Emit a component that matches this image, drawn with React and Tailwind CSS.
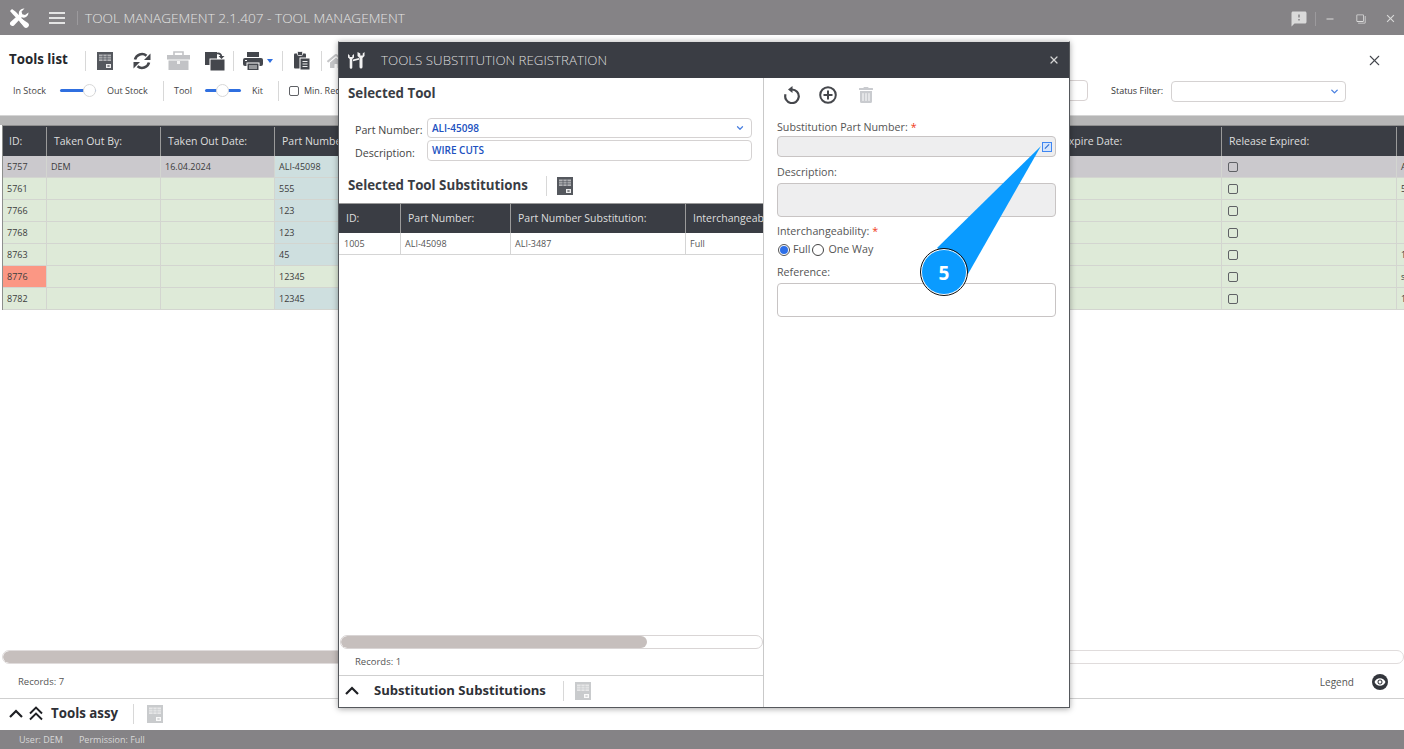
import { FaHome, FaTrashAlt } from 'react-icons/fa';
import { MdFeedback, MdClose, MdRemove, MdFilterNone, MdRemoveRedEye } from 'react-icons/md';
import { ChevronDown, X } from 'lucide-react';

const ROWS = [
  { id: '5757', by: 'DEM', date: '16.04.2024', part: 'ALI-45098', last: 'A', selected: true },
  { id: '5761', part: '555', last: '5' },
  { id: '7766', part: '123', last: '' },
  { id: '7768', part: '123', last: '' },
  { id: '8763', part: '45', last: '1' },
  { id: '8776', part: '12345', last: 's', expired: true },
  { id: '8782', part: '12345', last: '1' },
];

const COLS = 'grid grid-cols-[44px_114px_114px_200px_581px_166px_175px_60px]';
const SUB_COLS = 'grid grid-cols-[62px_110px_175px_100px]';

// little sheet with grid lines, used for the excel export buttons
function ExcelIcon({ faded }) {
  const fill = faded ? '#c9cbcd' : '#55585e';
  return (
    <svg width="16" height="18" viewBox="0 0 16 18" className="shrink-0">
      <rect width="16" height="18" fill={fill} />
      <rect x="2" y="2.500" width="12" height="6.500" fill="#fff" opacity="0.55" />
      <path d="M2 4.700h12M2 6.900h12M6 2.500v6.500M10 2.500v6.500" stroke={fill} strokeWidth="0.7" />
      <rect x="9" y="12" width="5" height="4" fill="#fff" opacity="0.9" />
      <path d="M10.500 13l2 2m0-2l-2 2" stroke={fill} strokeWidth="0.9" />
    </svg>
  );
}

function SyncIcon() {
  return (
    <svg width="20" height="20" viewBox="0 0 20 20" className="shrink-0" fill="none" stroke="#45474c" strokeWidth="2.600">
      <path d="M3 8.500a7.200 7.200 0 0 1 11.500-3.800" />
      <path d="M17 11.500a7.200 7.200 0 0 1-11.500 3.800" />
      <path d="M18.500 2.500v6.500h-6.500z" fill="#45474c" stroke="none" />
      <path d="M1.500 17.500v-6.500h6.500z" fill="#45474c" stroke="none" />
    </svg>
  );
}

function ToolboxIcon() {
  return (
    <svg width="23" height="19" viewBox="0 0 23 19" className="shrink-0">
      <path d="M7 4V1h9v3" fill="none" stroke="#c2c3c6" strokeWidth="1.600" />
      <rect y="4" width="23" height="4.500" fill="#c2c3c6" />
      <rect x="1.500" y="9.500" width="20" height="9.500" fill="#c2c3c6" />
      <rect x="10" y="10" width="3" height="3" fill="#f4f4f4" />
    </svg>
  );
}

function ExportIcon() {
  return (
    <svg width="20" height="20" viewBox="0 0 20 20" className="shrink-0">
      <rect x="0" y="1" width="12" height="13" fill="#44474d" />
      <rect x="5" y="8" width="15" height="12" fill="#44474d" stroke="#fff" strokeWidth="1" />
      <path d="M12 2.500c2.500-.5 4 .5 4.500 3" fill="none" stroke="#44474d" strokeWidth="1.500" />
      <path d="M13.500 5h6l-3 3z" fill="#44474d" />
    </svg>
  );
}

function PrinterIcon() {
  return (
    <svg width="20" height="20" viewBox="0 0 20 20" className="shrink-0">
      <rect x="4" y="1" width="12" height="5" fill="#44474d" />
      <rect y="7" width="20" height="8" rx="2" fill="#44474d" />
      <rect x="2" y="9" width="2" height="1" fill="#fff" />
      <rect x="4" y="12" width="12" height="7.500" fill="#44474d" stroke="#fff" strokeWidth="1" />
      <path d="M6 15h8M6 17h8" stroke="#fff" strokeWidth="0.9" />
    </svg>
  );
}

function ClipboardIcon() {
  return (
    <svg width="16" height="19" viewBox="0 0 16 19" className="shrink-0">
      <rect x="0" y="2.500" width="12" height="15" rx="1" fill="#44474d" />
      <rect x="3.500" y="0.500" width="5" height="4" rx="1" fill="#44474d" stroke="#fff" strokeWidth="0.8" />
      <rect x="6" y="7" width="10" height="12" fill="#44474d" stroke="#fff" strokeWidth="1" />
      <path d="M8.500 10.500h5M8.500 13h5M8.500 15.500h5" stroke="#fff" strokeWidth="0.9" />
    </svg>
  );
}

function AppLogo() {
  return (
    <svg width="20" height="20" viewBox="0 0 20 20" className="shrink-0" fill="#fff">
      <path d="M1 3l2-2 4 3 9 10-2.500 2.500L4 6.500z" />
      <path d="M13 11l-2.500 2.500 4.500 5.500a2.500 2.500 0 0 0 4-4z" />
      <path d="M19.500 4.500a5 5 0 0 1-6.800 4.800L5 17.500a2.500 2.500 0 0 1-3.500-3.500l8.400-7.600A5 5 0 0 1 15.500.500L12.500 3.500l.8 2.700 2.700.8z" />
    </svg>
  );
}

function ToolsGlyph() {
  // pair of upright wrenches in the dialog title
  return (
    <svg width="18" height="18" viewBox="0 0 18 18" fill="#f2f2f2" className="shrink-0">
      <path d="M1 2v3.500L2.700 7v8.500a1.300 1.300 0 0 0 2.600 0V7L7 5.500V2L5.300 3.500V5H2.700V3.500z" transform="translate(0 1)" />
      <path d="M10.500 1v4L12.500 7v9a1.500 1.500 0 0 0 3 0V7L17.500 5V1l-1.800 1.500V4.500h-2.400V2.500z" />
      <path d="M6 8.500l6-1.500v1.800l-6 1.500z" />
    </svg>
  );
}

function Chevron() {
  return (
    <svg width="14" height="9" viewBox="0 0 14 9" fill="none" stroke="#1f2024" strokeWidth="2.200" className="shrink-0">
      <path d="M1 8l6-6 6 6" />
    </svg>
  );
}

function DoubleChevron() {
  return (
    <svg width="14" height="15" viewBox="0 0 14 15" fill="none" stroke="#1f2024" strokeWidth="1.900" className="shrink-0">
      <path d="M1 7.500l6-6 6 6M1 13.500l6-6 6 6" />
    </svg>
  );
}

function RefreshIcon() {
  return (
    <svg width="18" height="18" viewBox="0 0 18 18" className="shrink-0" fill="none" stroke="#45474c" strokeWidth="2.200">
      <path d="M9 3.500a6.800 6.800 0 1 1-6.500 4.800" />
      <path d="M9.500 0v7L5 3.500z" fill="#45474c" stroke="none" />
    </svg>
  );
}

function AddIcon() {
  return (
    <svg width="18" height="18" viewBox="0 0 18 18" className="shrink-0" fill="none" stroke="#45474c" strokeWidth="2">
      <circle cx="9" cy="9" r="7.800" />
      <path d="M9 4.500v9M4.500 9h9" />
    </svg>
  );
}

function Divider({ h = 'h-[20px]' }) {
  return <div className={`w-px ${h} bg-[#d8d8d8] shrink-0`} />;
}

function Toggle({ knob }) {
  return (
    <div className="relative w-[36px] h-[14px] flex items-center shrink-0">
      <div className="w-full h-[3px] bg-[#2f6fe0] rounded-full" />
      <div className={`absolute ${knob} w-[13px] h-[13px] rounded-full bg-white border border-[#d8d8d8]`} />
    </div>
  );
}

function CheckBox() {
  return <div className="w-[10px] h-[10px] border-[1.500px] border-[#5f6165] rounded-[2px] bg-transparent" />;
}

function MainTable() {
  return (
    <div className="flex-1 min-h-0 overflow-hidden pl-[2px]">
      <div className="w-[1456px] border-l border-[#8d8f8d]">
        <div className={`${COLS} h-[31px] pt-[1px] bg-[#3a3d44] text-[#dedede] text-[10.500px] border-t border-[#8e8e8e]`}>
          {['ID:', 'Taken Out By:', 'Taken Out Date:', 'Part Number', '', 'Expire Date:', 'Release Expired:', ''].map((h, i) => (
            <div key={i} className={`flex items-center border-r border-[#9a9a9a] whitespace-nowrap ${i === 0 ? 'pl-[6px]' : 'pl-[7px]'}`}>{h}</div>
          ))}
        </div>
        {ROWS.map((r) => {
          const bg = r.selected ? 'bg-[#cbc9cd]' : 'bg-[#deead8]';
          const partBg = r.expired ? 'bg-[#deead8]' : 'bg-[#cedfdf]';
          return (
            <div key={r.id} className={`${COLS} h-[22px] text-[9px] text-[#3c3c3c] ${bg}`}>
              <div className={`flex items-center pl-[4px] border-r border-b border-[#d3d5d0] ${r.expired ? 'bg-[#fb9784]' : ''}`}>{r.id}</div>
              <div className="flex items-center pl-[4px] border-r border-b border-[#d3d5d0]">{r.by}</div>
              <div className="flex items-center pl-[4px] border-r border-b border-[#d3d5d0]">{r.date}</div>
              <div className={`flex items-center pl-[4px] border-b border-[#d3d5d0] ${partBg}`}>{r.part}</div>
              <div className="border-r border-b border-[#d3d5d0]" />
              <div className="border-r border-b border-[#d3d5d0]" />
              <div className="flex items-center pl-[6px] border-r border-b border-[#d3d5d0]">
                <CheckBox />
              </div>
              <div className="flex items-center pl-[4px] border-b border-[#d3d5d0]">{r.last}</div>
            </div>
          );
        })}
      </div>
    </div>
  );
}

function Field({ label, required, className, children }) {
  return (
    <div className={className}>
      <div className="h-[16px] pb-[2px] flex items-center text-[10.700px] text-[#555] whitespace-nowrap">
        {label}
        {required && <span className="text-[#f03a17] ml-[3px]">*</span>}
      </div>
      {children}
    </div>
  );
}

function Dialog() {
  return (
    <div className="absolute left-[338px] top-[41px] w-[732px] h-[667px] flex flex-col border border-[#55585c] border-t-[#dcdcdc] bg-white shadow-[0_1px_6px_rgba(0,0,0,0.35)]">
      <div className="h-[36px] shrink-0 bg-[#3a3d44] flex items-center pl-[8px] pr-[9px] text-[#dcdcdc]">
        <ToolsGlyph />
        <span className="ml-[16px] mt-[1px] text-[13.300px] font-light whitespace-nowrap">TOOLS SUBSTITUTION REGISTRATION</span>
        <X size={12} strokeWidth={2.5} className="ml-auto text-[#d4d4d4]" />
      </div>
      <div className="flex-1 flex min-h-0">
        <div className="w-[425px] shrink-0 flex flex-col border-r border-[#c9c9c9] min-w-0">
          <div className="pl-[9px] pt-[6px] h-[39px] text-[13.300px] font-bold text-[#3a3d44]">Selected Tool</div>
          <div className="flex items-center h-[22px] pl-[16px] pr-[11px]">
            <span className="w-[72px] text-[10.700px] text-[#444] mt-[5px]">Part Number:</span>
            <div className="flex-1 h-[20px] border border-[#d5d2d2] rounded-[4px] flex items-center pl-[4px] pr-[6px] text-[10px] font-semibold text-[#2050c0]">
              ALI-45098
              <ChevronDown size={10} strokeWidth={3} className="ml-auto text-[#4a80e0]" />
            </div>
          </div>
          <div className="flex items-center h-[23px] pl-[16px] pr-[11px]">
            <span className="w-[72px] text-[10.700px] text-[#444] mt-[5px]">Description:</span>
            <div className="flex-1 h-[21px] border border-[#d5d2d2] rounded-[4px] flex items-center pl-[4px] text-[10px] font-semibold text-[#2050c0]">
              WIRE CUTS
            </div>
          </div>
          <div className="flex items-center h-[41px] pl-[9px] pt-[6px] shrink-0">
            <span className="text-[13.300px] font-bold text-[#3a3d44] whitespace-nowrap">Selected Tool Substitutions</span>
            <div className="ml-[18px]"><Divider /></div>
            <div className="ml-[10px]"><ExcelIcon /></div>
          </div>
          <div className="flex-1 min-h-0 overflow-hidden">
            <div className={`${SUB_COLS} h-[30px] w-[447px] bg-[#3a3d44] text-[#dedede] text-[10.500px] border-t border-[#9a9a9a]`}>
              {['ID:', 'Part Number:', 'Part Number Substitution:', 'Interchangeability:'].map((h, i) => (
                <div key={h} className={`flex items-center pl-[7px] whitespace-nowrap overflow-hidden ${i < 3 ? 'border-r border-[#9a9a9a]' : ''}`}>{h}</div>
              ))}
            </div>
            <div className={`${SUB_COLS} h-[22px] w-[447px] text-[9px] text-[#555] border-b border-[#d5d5d5]`}>
              {['1005', 'ALI-45098', 'ALI-3487', 'Full'].map((c, i) => (
                <div key={c} className={`flex items-center border-r border-[#d5d5d5] ${i === 0 ? 'pl-[5px]' : 'pl-[4px]'}`}>{c}</div>
              ))}
            </div>
          </div>
          <div className="h-[14px] shrink-0 ml-[1px] border border-[#d9d5d5] rounded-full overflow-hidden">
            <div className="w-[306px] h-full bg-[#c6bfbd] rounded-full" />
          </div>
          <div className="h-[26px] shrink-0 flex items-center pl-[16px] text-[9.500px] text-[#555]">Records: 1</div>
          <div className="h-[32px] shrink-0 border-t border-[#cfcfcf] flex items-center pl-[6px] pb-[2px]">
            <Chevron />
            <span className="ml-[15px] text-[13.100px] font-bold text-[#2e3036] whitespace-nowrap">Substitution Substitutions</span>
            <div className="ml-[17px]"><Divider /></div>
            <div className="ml-[11px]"><ExcelIcon faded /></div>
          </div>
        </div>
        <div className="flex-1 min-w-0 pl-[13px] pr-[13px]">
          <div className="flex items-center h-[33px] pl-[6px] pt-[1px] text-[#45474c]">
            <RefreshIcon />
            <div className="ml-[18px]"><AddIcon /></div>
            <FaTrashAlt size={16} className="text-[#c9cbcf] ml-[21px]" />
          </div>
          <Field label="Substitution Part Number:" required className="mt-[9px]">
            <div className="h-[21px] bg-[#eeeeef] border border-[#c8c4c4] rounded-[4px] flex items-center justify-end pr-[3px]">
              <div className="w-[10px] h-[10px] border border-[#3f86f2] bg-[#d4e4fb] flex items-center justify-center">
                <div className="w-[6px] h-px bg-[#2c6bd0] -rotate-45" />
              </div>
            </div>
          </Field>
          <Field label="Description:" className="mt-[8px]">
            <div className="mt-[2px] h-[34px] bg-[#eeeeef] border border-[#c8c4c4] rounded-[4px]" />
          </Field>
          <Field label="Interchangeability:" required className="mt-[7px]">
            <div className="flex items-center h-[19px] text-[10.700px] text-[#555]">
              <div className="ml-[1px] w-[12px] h-[12px] rounded-full border border-[#555] flex items-center justify-center">
                <div className="w-[8px] h-[8px] rounded-full bg-[#2d6fe8]" />
              </div>
              <span className="ml-[3px]">Full</span>
              <div className="ml-[2px] w-[12px] h-[12px] rounded-full border border-[#444]" />
              <span className="ml-[4px]">One Way</span>
            </div>
          </Field>
          <Field label="Reference:" className="mt-[6px]">
            <div className="mt-[2px] h-[34px] border border-[#c8c4c4] rounded-[4px] bg-white" />
          </Field>
        </div>
      </div>
    </div>
  );
}

function Callout() {
  return (
    <div className="absolute left-[915px] top-[140px] w-[135px] h-[160px]">
      <svg width="135" height="160" viewBox="0 0 135 160">
        <polygon points="126,6 22,108 53,134" fill="#0a9bff" />
        <circle cx="29" cy="132" r="22.500" fill="#0a9bff" stroke="#fff" strokeWidth="1" />
        <circle cx="29" cy="132" r="23.500" fill="none" stroke="#111" strokeWidth="1" />
      </svg>
      <span className="absolute left-[9px] top-[121px] w-[40px] text-center text-[19px] leading-[24px] font-bold text-white">5</span>
    </div>
  );
}

export default function App() {
  return (
    <div className="relative w-[1404px] h-[749px] overflow-hidden bg-white flex flex-col font-['Open_Sans','Noto_Sans',sans-serif]">
      {/* title bar */}
      <div className="h-[35px] shrink-0 bg-[#858386] flex items-center pl-[9px] pr-[7px] text-[#e4e4e4]">
        <AppLogo />
        <div className="ml-[20px] flex flex-col gap-[3px]">
          <div className="w-[16px] h-[2px] bg-[#e4e4e4]" />
          <div className="w-[16px] h-[2px] bg-[#e4e4e4]" />
          <div className="w-[16px] h-[2px] bg-[#e4e4e4]" />
        </div>
        <div className="ml-[12px] w-px h-[14px] bg-[#9c9a9d]" />
        <span className="ml-[7px] mt-[1px] text-[13.600px] font-light whitespace-nowrap">TOOL MANAGEMENT 2.1.407 - TOOL MANAGEMENT</span>
        <div className="ml-auto flex items-center text-[#dadada] mt-[2px]">
          <MdFeedback size={18} />
          <div className="ml-[7px] w-px h-[14px] bg-[#9c9a9d]" />
          <MdRemove size={12} className="ml-[8px]" />
          <MdFilterNone size={10} className="ml-[20px] -scale-x-100" />
          <MdClose size={13} className="ml-[18px]" />
        </div>
      </div>

      {/* toolbar */}
      <div className="h-[80px] shrink-0 flex flex-col">
        <div className="h-[43px] flex items-center pl-[9px] pr-[21px] pt-[8px]">
          <span className="text-[13.300px] font-bold text-[#25272c] w-[76px] mb-[2px] whitespace-nowrap">Tools list</span>
          <Divider />
          <div className="ml-[11px]"><ExcelIcon /></div>
          <div className="ml-[19px]"><SyncIcon /></div>
          <div className="ml-[15px]"><ToolboxIcon /></div>
          <div className="ml-[15px]"><ExportIcon /></div>
          <div className="ml-[8px]"><Divider /></div>
          <div className="ml-[9px]"><PrinterIcon /></div>
          <div className="ml-[4px] w-0 h-0 border-x-[3.500px] border-x-transparent border-t-[4px] border-t-[#2f6fe0]" />
          <div className="ml-[9px]"><Divider /></div>
          <div className="ml-[11px]"><ClipboardIcon /></div>
          <div className="ml-[11px]"><Divider /></div>
          <FaHome size={18} className="ml-[5px] text-[#c4c5c7]" />
          <X size={17} strokeWidth={1.500} className="ml-auto text-[#44474d]" />
        </div>
        <div className="h-[25px] flex items-center text-[9px] text-[#444] whitespace-nowrap">
          <span className="ml-[13px] w-[47px]">In Stock</span>
          <Toggle knob="right-0" />
          <span className="ml-[11px] w-[56px]">Out Stock</span>
          <Divider />
          <span className="ml-[10px] w-[31px]">Tool</span>
          <Toggle knob="left-[11px]" />
          <span className="ml-[11px] w-[26px]">Kit</span>
          <Divider />
          <div className="ml-[10px]"><CheckBox /></div>
          <span className="ml-[5px] w-[60px]">Min. Req</span>
          <div className="ml-auto mr-[316px] w-[100px] h-[21px] border border-[#d8d2d2] rounded-[4px]" />
        </div>
      </div>

      {/* status filter sits at the far end of the second toolbar row */}
      <div className="absolute left-[1111px] top-[79px] flex items-center">
        <span className="w-[60px] text-[9px] text-[#333] whitespace-nowrap">Status Filter:</span>
        <div className="w-[175px] h-[21px] mt-[2px] border border-[#d5d2d2] rounded-[4px] flex items-center justify-end pr-[5px]">
          <ChevronDown size={11} strokeWidth={3} className="text-[#4a80e0]" />
        </div>
      </div>

      <div className="h-[10px] shrink-0 bg-[#b6b6b6] border-t border-[#d5d5d5]" />
      <MainTable />

      <div className="h-[14px] shrink-0 ml-[2px] mb-[1px] border border-[#e0dcdc] rounded-full overflow-hidden">
        <div className="w-[600px] h-full bg-[#c6bfbd] rounded-full" />
      </div>
      <div className="h-[33px] shrink-0 flex items-center pl-[18px] pr-[16px] pt-[1px] text-[9.500px] text-[#555]">
        Records: 7
        <span className="ml-auto text-[10px]">Legend</span>
        <MdRemoveRedEye size={16} className="ml-[18px] p-[2px] rounded-full bg-[#33363c] text-white" />
      </div>
      <div className="h-[32px] shrink-0 border-t border-[#cfcfcf] flex items-center pl-[9px] pb-[2px]">
        <Chevron />
        <div className="ml-[6px]"><DoubleChevron /></div>
        <span className="ml-[8px] text-[13.300px] font-bold text-[#2e3036] whitespace-nowrap">Tools assy</span>
        <div className="ml-[15px]"><Divider /></div>
        <div className="ml-[13px]"><ExcelIcon faded /></div>
      </div>
      <div className="h-[19px] shrink-0 bg-[#858386] flex items-center pl-[19px] gap-[16px] text-[9px] text-[#d8d8d8]">
        <span>User: DEM</span>
        <span>Permission: Full</span>
      </div>

      <Dialog />
      <Callout />
    </div>
  );
}
